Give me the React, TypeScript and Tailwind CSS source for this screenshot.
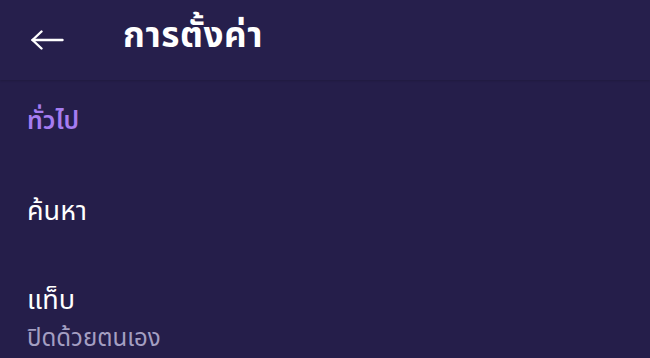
const font = { fontFamily: '"Noto Sans Thai", "Noto Sans", "DejaVu Sans", sans-serif' };

function BackArrow() {
  return (
    <svg viewBox="0 0 33 20" className="h-5 w-[33px]" fill="none" stroke="white" strokeWidth={2.4} strokeLinecap="round" strokeLinejoin="round">
      <path d="M1.5 10H31.5" />
      <path d="M10.5 1.5L1.5 10l9 8.5" />
    </svg>
  );
}

export default function App() {
  return (
    <div className="h-[358px] w-[650px] overflow-hidden bg-[#251e4a]" style={font}>
      <header className="flex h-20 items-center bg-[#261f4c] pb-[6px] shadow-[0_1px_2px_rgba(0,0,0,0.15)]">
        <div className="ml-[31px] pt-[5px]">
          <BackArrow />
        </div>
        <h1 className="ml-[59px] text-[35px] font-bold tracking-[0.6px] text-white">การตั้งค่า</h1>
      </header>
      <div className="px-[27px]">
        <p className="flex h-[84px] items-center text-[25px] font-semibold text-[#a57cf1]">ทั่วไป</p>
        <p className="flex h-[96px] items-center text-[27px] text-white">ค้นหา</p>
        <div className="pt-[23px]">
          <p className="text-[27px] leading-[36px] text-white">แท็บ</p>
          <p className="pt-[2px] text-[24px] leading-[36px] text-[#a49fc2]">ปิดด้วยตนเอง</p>
        </div>
      </div>
    </div>
  );
}
